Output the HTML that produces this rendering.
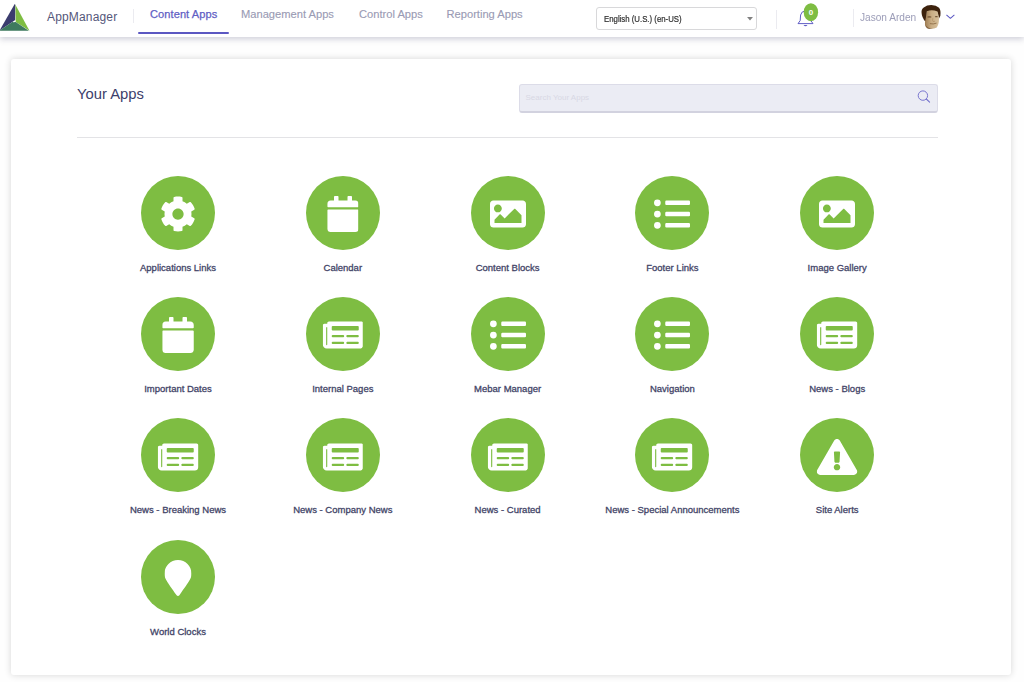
<!DOCTYPE html>
<html lang="en">
<head>
<meta charset="utf-8">
<title>AppManager</title>
<style>
*{box-sizing:border-box;margin:0;padding:0}
html,body{width:1024px;height:682px;overflow:hidden;background:#fefefe;font-family:"Liberation Sans",sans-serif}
.abs{position:absolute}
#hdr{position:absolute;left:0;top:0;width:1024px;height:37px;background:#fff;box-shadow:0 2px 6px rgba(60,60,100,.25);z-index:5}
.t{position:absolute;white-space:nowrap;line-height:1}
.nav{font-size:11.15px;color:#9a9bb4;top:9.300px;-webkit-text-stroke:.12px #9a9bb4}
.nav.on{color:#615ec4;-webkit-text-stroke:.25px #615ec4;letter-spacing:.08px;font-size:11.05px}
.vd{position:absolute;width:1px;background:#ebebf0}
#card{position:absolute;left:11px;top:59px;width:999.500px;height:616px;background:#fff;border-radius:3px;box-shadow:0 0 7px rgba(0,0,0,.16)}
.app{position:absolute;width:74px;height:74px;border-radius:50%;background:#7ebd42}
.app svg{position:absolute;left:50%;top:calc(50% + 1.3px);transform:translate(-50%,-50%);fill:#fff}
.lbl{position:absolute;white-space:nowrap;line-height:1;font-size:9.5px;font-weight:400;color:#434568;-webkit-text-stroke:.3px #434568;transform:translateX(-50%)}
#search{position:absolute;left:519px;top:84px;width:419px;height:28.5px;background:#ebecf4;border:1px solid #dcdce8;border-bottom:2px solid #d2d2df;border-radius:3px}
</style>
</head>
<body>
<div id="hdr">
  <svg class="abs" id="logo" style="left:0;top:0" width="32" height="32" viewBox="0 0 32 32">
    <polygon points="14.7,4 -0.3,30.4 12.700,21.700 15.200,20 15.300,4.800" fill="#3b3c6e"/>
    <polygon points="15.400,4.800 29.500,30.700 15.700,22.100" fill="#7ebd42"/>
    <polygon points="-0.3,30.400 12.700,21.700 13.200,22.200 15.700,22.100 28.800,30.700 -0.3,30.700" fill="#3e7a5e"/>
  </svg>
  <div class="t" id="brand" style="left:47px;top:11.150px;font-size:12px;letter-spacing:.16px;color:#55577a">AppManager</div>
  <div class="vd" style="left:133px;top:9px;height:14px"></div>
  <div class="t nav on" id="n1" style="left:150px">Content Apps</div>
  <div class="abs" style="left:138px;top:31.5px;width:91px;height:2px;background:#5b57c2;border-radius:1px"></div>
  <div class="t nav" id="n2" style="left:241px">Management Apps</div>
  <div class="t nav" id="n3" style="left:359px">Control Apps</div>
  <div class="t nav" id="n4" style="left:446.5px">Reporting Apps</div>
  <div class="abs" style="left:596px;top:6.500px;width:161px;height:23px;border:1px solid #d8d8da;border-radius:3px;background:#fff"></div>
  <div class="t" id="sel" style="left:604px;top:14.700px;font-size:8.8px;color:#2e2e2e;-webkit-text-stroke:.2px #2e2e2e;transform:scaleX(.887);transform-origin:0 0">English (U.S.) (en-US)</div>
  <svg class="abs" style="left:747.400px;top:17.400px" width="6" height="3.400" viewBox="0 0 7 4"><polygon points="0,0 7,0 3.500,4" fill="#808080"/></svg>
  <div class="vd" style="left:776px;top:10px;height:18.500px"></div>
  <svg class="abs" id="bell" style="left:796px;top:2px" width="24" height="26" viewBox="0 0 24 26">
    <path d="M2 21.6 L4.2 18.6 L4.6 13 Q5.4 9.2 9.4 8.8 Q13.4 9.2 14.4 13 L14.8 18.6 L17 21.6 Z" fill="none" stroke="#625fc6" stroke-width="1" stroke-linejoin="round"/>
    <path d="M7.500 22.900 Q9.500 25.400 11.500 22.900 Z" fill="#625fc6"/>
    <ellipse cx="14.9" cy="10.2" rx="7.2" ry="9" fill="#7ebd42"/>
    <text x="14.9" y="12.9" font-size="8" font-weight="700" fill="#fff" text-anchor="middle" font-family="Liberation Sans, sans-serif">0</text>
  </svg>
  <div class="vd" style="left:853px;top:9px;height:18px"></div>
  <div class="t" id="user" style="left:860px;top:11.600px;font-size:10.6px;color:#9c9db8;transform:scaleX(.955);transform-origin:0 0">Jason Arden</div>
  <svg class="abs" id="face" style="left:900px;top:0" width="64" height="40" viewBox="0 0 1024 640">
    <defs>
      <linearGradient id="sk" x1="0" y1="0" x2="1" y2="0"><stop offset="0" stop-color="#9c7a50"/><stop offset=".45" stop-color="#c9ad84"/><stop offset="1" stop-color="#d6c09c"/></linearGradient>
      <filter id="bl" x="-10%" y="-10%" width="120%" height="120%"><feGaussianBlur stdDeviation="5"/></filter>
    </defs>
    <g filter="url(#bl)">
    <path d="M345 205 Q338 150 380 118 Q430 80 500 80 Q580 82 625 125 Q657 170 646 250 L622 300 L600 200 L430 180 L425 340 L405 345 Q350 285 345 205 Z" fill="#3d2410"/>
    <path d="M432 178 Q510 150 600 182 Q620 240 624 300 Q622 395 588 438 Q530 472 450 456 Q402 440 400 400 Q394 350 406 318 Q422 250 432 178 Z" fill="url(#sk)"/>
    <ellipse cx="470" cy="270" rx="34" ry="11" fill="#5b3b1e" opacity=".85"/>
    <ellipse cx="582" cy="266" rx="24" ry="10" fill="#5b3b1e" opacity=".8"/>
    <path d="M525 290 Q515 330 530 345 L560 340" stroke="#a07c50" stroke-width="10" fill="none" opacity=".7"/>
    <path d="M478 378 Q530 392 585 370" stroke="#7d5a36" stroke-width="11" fill="none"/>
    <path d="M405 400 Q450 455 530 462 Q480 470 430 450 Z" fill="#6e4d2a" opacity=".7"/>
    </g>
  </svg>
  <svg class="abs" style="left:945px;top:14px" width="11" height="6" viewBox="0 0 11 6"><path d="M1.700 1.200 L5.400 4.300 L9.100 1.200" fill="none" stroke="#5b57c2" stroke-width="1.050" stroke-linecap="round" stroke-linejoin="round"/></svg>
</div>
<div id="card"></div>
<div class="t" id="ya" style="left:77px;top:86.800px;font-size:14.8px;color:#3c3e6b">Your Apps</div>
<div id="search"></div>
<div class="t" id="ph" style="left:525.500px;top:93.600px;font-size:8px;color:#d8d8e4">Search Your Apps</div>
<svg class="abs" style="left:916px;top:89px" width="16" height="16" viewBox="0 0 16 16"><circle cx="6.900" cy="6.600" r="4.700" fill="none" stroke="#7370cc" stroke-width=".95"/><path d="M10.300 10 L13.600 13.200" stroke="#7370cc" stroke-width="1.050" stroke-linecap="round"/></svg>
<div class="abs" style="left:77px;top:137px;width:861px;height:1px;background:#e3e3e6"></div>
<div class="app" style="left:141.0px;top:175.6px"><svg width="36.00" height="36" viewBox="0 0 512 512"><path d="M487.4 315.7l-42.6-24.6c4.3-23.2 4.3-47 0-70.2l42.6-24.6c4.9-2.8 7.1-8.600 5.5-14-11.1-35.6-30-67.8-54.7-94.6-3.8-4.100-10-5.100-14.8-2.300L380.800 110c-17.900-15.400-38.500-27.300-60.800-35.100V25.800c0-5.600-3.900-10.500-9.400-11.700-36.700-8.200-74.300-7.800-109.200 0-5.500 1.200-9.400 6.100-9.400 11.700V75c-22.200 7.900-42.800 19.800-60.800 35.100L88.700 85.500c-4.900-2.800-11-1.900-14.800 2.300-24.700 26.700-43.600 58.900-54.700 94.600-1.700 5.400.6 11.200 5.500 14L67.300 221c-4.300 23.200-4.300 47 0 70.200l-42.600 24.600c-4.900 2.800-7.100 8.600-5.500 14 11.100 35.600 30 67.800 54.700 94.600 3.800 4.100 10 5.100 14.800 2.300l42.600-24.600c17.900 15.400 38.500 27.300 60.800 35.100v49.200c0 5.600 3.900 10.500 9.400 11.700 36.700 8.200 74.300 7.800 109.200 0 5.500-1.200 9.400-6.100 9.400-11.700v-49.200c22.200-7.900 42.800-19.800 60.800-35.100l42.600 24.600c4.900 2.800 11 1.900 14.800-2.300 24.700-26.700 43.600-58.900 54.700-94.600 1.500-5.500-.7-11.300-5.600-14.100zM256 336c-44.100 0-80-35.900-80-80s35.900-80 80-80 80 35.900 80 80-35.900 80-80 80z"/></svg></div>
<div class="lbl" style="left:178.0px;top:262.60px">Applications Links</div>
<div class="app" style="left:305.8px;top:175.6px"><svg width="31.50" height="36" viewBox="0 0 448 512"><path d="M12 192h424c6.600 0 12 5.400 12 12v260c0 26.500-21.500 48-48 48H48c-26.500 0-48-21.500-48-48V204c0-6.600 5.400-12 12-12zm436-44v-36c0-26.500-21.500-48-48-48h-48V12c0-6.600-5.400-12-12-12h-40c-6.600 0-12 5.400-12 12v52H160V12c0-6.600-5.400-12-12-12h-40c-6.600 0-12 5.400-12 12v52H48C21.500 64 0 85.500 0 112v36c0 6.600 5.400 12 12 12h424c6.600 0 12-5.400 12-12z"/></svg></div>
<div class="lbl" style="left:342.8px;top:262.60px">Calendar</div>
<div class="app" style="left:470.6px;top:175.6px"><svg width="36.00" height="36" viewBox="0 0 512 512"><path d="M464 448H48c-26.510 0-48-21.490-48-48V112c0-26.510 21.490-48 48-48h416c26.510 0 48 21.490 48 48v288c0 26.510-21.490 48-48 48zM112 120c-30.928 0-56 25.072-56 56s25.072 56 56 56 56-25.072 56-56-25.072-56-56-56zM64 384h384V272l-87.515-87.515c-4.686-4.686-12.284-4.686-16.971 0L208 320l-55.515-55.515c-4.686-4.686-12.284-4.686-16.971 0L64 336v48z"/></svg></div>
<div class="lbl" style="left:507.6px;top:262.60px">Content Blocks</div>
<div class="app" style="left:635.4px;top:175.6px"><svg width="36.00" height="36" viewBox="0 0 512 512"><path d="M48 48a48 48 0 1 0 48 48 48 48 0 0 0-48-48zm0 160a48 48 0 1 0 48 48 48 48 0 0 0-48-48zm0 160a48 48 0 1 0 48 48 48 48 0 0 0-48-48zm448 16H176a16 16 0 0 0-16 16v32a16 16 0 0 0 16 16h320a16 16 0 0 0 16-16v-32a16 16 0 0 0-16-16zm0-320H176a16 16 0 0 0-16 16v32a16 16 0 0 0 16 16h320a16 16 0 0 0 16-16V80a16 16 0 0 0-16-16zm0 160H176a16 16 0 0 0-16 16v32a16 16 0 0 0 16 16h320a16 16 0 0 0 16-16v-32a16 16 0 0 0-16-16z"/></svg></div>
<div class="lbl" style="left:672.4px;top:262.60px">Footer Links</div>
<div class="app" style="left:800.2px;top:175.6px"><svg width="36.00" height="36" viewBox="0 0 512 512"><path d="M464 448H48c-26.510 0-48-21.490-48-48V112c0-26.510 21.490-48 48-48h416c26.510 0 48 21.490 48 48v288c0 26.510-21.490 48-48 48zM112 120c-30.928 0-56 25.072-56 56s25.072 56 56 56 56-25.072 56-56-25.072-56-56-56zM64 384h384V272l-87.515-87.515c-4.686-4.686-12.284-4.686-16.971 0L208 320l-55.515-55.515c-4.686-4.686-12.284-4.686-16.971 0L64 336v48z"/></svg></div>
<div class="lbl" style="left:837.2px;top:262.60px">Image Gallery</div>
<div class="app" style="left:141.0px;top:297.0px"><svg width="31.50" height="36" viewBox="0 0 448 512"><path d="M12 192h424c6.600 0 12 5.400 12 12v260c0 26.500-21.500 48-48 48H48c-26.500 0-48-21.500-48-48V204c0-6.600 5.400-12 12-12zm436-44v-36c0-26.500-21.500-48-48-48h-48V12c0-6.600-5.400-12-12-12h-40c-6.600 0-12 5.400-12 12v52H160V12c0-6.600-5.400-12-12-12h-40c-6.600 0-12 5.400-12 12v52H48C21.500 64 0 85.500 0 112v36c0 6.600 5.400 12 12 12h424c6.600 0 12-5.400 12-12z"/></svg></div>
<div class="lbl" style="left:178.0px;top:384.00px">Important Dates</div>
<div class="app" style="left:305.8px;top:297.0px"><svg width="40.50" height="36" viewBox="0 0 576 512"><path d="M552 64H88c-13.255 0-24 10.745-24 24v8H24c-13.255 0-24 10.745-24 24v272c0 30.928 25.072 56 56 56h472c26.510 0 48-21.490 48-48V88c0-13.255-10.745-24-24-24zM56 400a8 8 0 0 1-8-8V144h16v248a8 8 0 0 1-8 8zm236-16H140c-6.627 0-12-5.373-12-12v-8c0-6.627 5.373-12 12-12h152c6.627 0 12 5.373 12 12v8c0 6.627-5.373 12-12 12zm208 0H348c-6.627 0-12-5.373-12-12v-8c0-6.627 5.373-12 12-12h152c6.627 0 12 5.373 12 12v8c0 6.627-5.373 12-12 12zm-208-96H140c-6.627 0-12-5.373-12-12v-8c0-6.627 5.373-12 12-12h152c6.627 0 12 5.373 12 12v8c0 6.627-5.373 12-12 12zm208 0H348c-6.627 0-12-5.373-12-12v-8c0-6.627 5.373-12 12-12h152c6.627 0 12 5.373 12 12v8c0 6.627-5.373 12-12 12zm0-96H140c-6.627 0-12-5.373-12-12v-40c0-6.627 5.373-12 12-12h360c6.627 0 12 5.373 12 12v40c0 6.627-5.373 12-12 12z"/></svg></div>
<div class="lbl" style="left:342.8px;top:384.00px">Internal Pages</div>
<div class="app" style="left:470.6px;top:297.0px"><svg width="36.00" height="36" viewBox="0 0 512 512"><path d="M48 48a48 48 0 1 0 48 48 48 48 0 0 0-48-48zm0 160a48 48 0 1 0 48 48 48 48 0 0 0-48-48zm0 160a48 48 0 1 0 48 48 48 48 0 0 0-48-48zm448 16H176a16 16 0 0 0-16 16v32a16 16 0 0 0 16 16h320a16 16 0 0 0 16-16v-32a16 16 0 0 0-16-16zm0-320H176a16 16 0 0 0-16 16v32a16 16 0 0 0 16 16h320a16 16 0 0 0 16-16V80a16 16 0 0 0-16-16zm0 160H176a16 16 0 0 0-16 16v32a16 16 0 0 0 16 16h320a16 16 0 0 0 16-16v-32a16 16 0 0 0-16-16z"/></svg></div>
<div class="lbl" style="left:507.6px;top:384.00px">Mebar Manager</div>
<div class="app" style="left:635.4px;top:297.0px"><svg width="36.00" height="36" viewBox="0 0 512 512"><path d="M48 48a48 48 0 1 0 48 48 48 48 0 0 0-48-48zm0 160a48 48 0 1 0 48 48 48 48 0 0 0-48-48zm0 160a48 48 0 1 0 48 48 48 48 0 0 0-48-48zm448 16H176a16 16 0 0 0-16 16v32a16 16 0 0 0 16 16h320a16 16 0 0 0 16-16v-32a16 16 0 0 0-16-16zm0-320H176a16 16 0 0 0-16 16v32a16 16 0 0 0 16 16h320a16 16 0 0 0 16-16V80a16 16 0 0 0-16-16zm0 160H176a16 16 0 0 0-16 16v32a16 16 0 0 0 16 16h320a16 16 0 0 0 16-16v-32a16 16 0 0 0-16-16z"/></svg></div>
<div class="lbl" style="left:672.4px;top:384.00px">Navigation</div>
<div class="app" style="left:800.2px;top:297.0px"><svg width="40.50" height="36" viewBox="0 0 576 512"><path d="M552 64H88c-13.255 0-24 10.745-24 24v8H24c-13.255 0-24 10.745-24 24v272c0 30.928 25.072 56 56 56h472c26.510 0 48-21.490 48-48V88c0-13.255-10.745-24-24-24zM56 400a8 8 0 0 1-8-8V144h16v248a8 8 0 0 1-8 8zm236-16H140c-6.627 0-12-5.373-12-12v-8c0-6.627 5.373-12 12-12h152c6.627 0 12 5.373 12 12v8c0 6.627-5.373 12-12 12zm208 0H348c-6.627 0-12-5.373-12-12v-8c0-6.627 5.373-12 12-12h152c6.627 0 12 5.373 12 12v8c0 6.627-5.373 12-12 12zm-208-96H140c-6.627 0-12-5.373-12-12v-8c0-6.627 5.373-12 12-12h152c6.627 0 12 5.373 12 12v8c0 6.627-5.373 12-12 12zm208 0H348c-6.627 0-12-5.373-12-12v-8c0-6.627 5.373-12 12-12h152c6.627 0 12 5.373 12 12v8c0 6.627-5.373 12-12 12zm0-96H140c-6.627 0-12-5.373-12-12v-40c0-6.627 5.373-12 12-12h360c6.627 0 12 5.373 12 12v40c0 6.627-5.373 12-12 12z"/></svg></div>
<div class="lbl" style="left:837.2px;top:384.00px">News - Blogs</div>
<div class="app" style="left:141.0px;top:418.4px"><svg width="40.50" height="36" viewBox="0 0 576 512"><path d="M552 64H88c-13.255 0-24 10.745-24 24v8H24c-13.255 0-24 10.745-24 24v272c0 30.928 25.072 56 56 56h472c26.510 0 48-21.490 48-48V88c0-13.255-10.745-24-24-24zM56 400a8 8 0 0 1-8-8V144h16v248a8 8 0 0 1-8 8zm236-16H140c-6.627 0-12-5.373-12-12v-8c0-6.627 5.373-12 12-12h152c6.627 0 12 5.373 12 12v8c0 6.627-5.373 12-12 12zm208 0H348c-6.627 0-12-5.373-12-12v-8c0-6.627 5.373-12 12-12h152c6.627 0 12 5.373 12 12v8c0 6.627-5.373 12-12 12zm-208-96H140c-6.627 0-12-5.373-12-12v-8c0-6.627 5.373-12 12-12h152c6.627 0 12 5.373 12 12v8c0 6.627-5.373 12-12 12zm208 0H348c-6.627 0-12-5.373-12-12v-8c0-6.627 5.373-12 12-12h152c6.627 0 12 5.373 12 12v8c0 6.627-5.373 12-12 12zm0-96H140c-6.627 0-12-5.373-12-12v-40c0-6.627 5.373-12 12-12h360c6.627 0 12 5.373 12 12v40c0 6.627-5.373 12-12 12z"/></svg></div>
<div class="lbl" style="left:178.0px;top:505.40px">News - Breaking News</div>
<div class="app" style="left:305.8px;top:418.4px"><svg width="40.50" height="36" viewBox="0 0 576 512"><path d="M552 64H88c-13.255 0-24 10.745-24 24v8H24c-13.255 0-24 10.745-24 24v272c0 30.928 25.072 56 56 56h472c26.510 0 48-21.490 48-48V88c0-13.255-10.745-24-24-24zM56 400a8 8 0 0 1-8-8V144h16v248a8 8 0 0 1-8 8zm236-16H140c-6.627 0-12-5.373-12-12v-8c0-6.627 5.373-12 12-12h152c6.627 0 12 5.373 12 12v8c0 6.627-5.373 12-12 12zm208 0H348c-6.627 0-12-5.373-12-12v-8c0-6.627 5.373-12 12-12h152c6.627 0 12 5.373 12 12v8c0 6.627-5.373 12-12 12zm-208-96H140c-6.627 0-12-5.373-12-12v-8c0-6.627 5.373-12 12-12h152c6.627 0 12 5.373 12 12v8c0 6.627-5.373 12-12 12zm208 0H348c-6.627 0-12-5.373-12-12v-8c0-6.627 5.373-12 12-12h152c6.627 0 12 5.373 12 12v8c0 6.627-5.373 12-12 12zm0-96H140c-6.627 0-12-5.373-12-12v-40c0-6.627 5.373-12 12-12h360c6.627 0 12 5.373 12 12v40c0 6.627-5.373 12-12 12z"/></svg></div>
<div class="lbl" style="left:342.8px;top:505.40px">News - Company News</div>
<div class="app" style="left:470.6px;top:418.4px"><svg width="40.50" height="36" viewBox="0 0 576 512"><path d="M552 64H88c-13.255 0-24 10.745-24 24v8H24c-13.255 0-24 10.745-24 24v272c0 30.928 25.072 56 56 56h472c26.510 0 48-21.490 48-48V88c0-13.255-10.745-24-24-24zM56 400a8 8 0 0 1-8-8V144h16v248a8 8 0 0 1-8 8zm236-16H140c-6.627 0-12-5.373-12-12v-8c0-6.627 5.373-12 12-12h152c6.627 0 12 5.373 12 12v8c0 6.627-5.373 12-12 12zm208 0H348c-6.627 0-12-5.373-12-12v-8c0-6.627 5.373-12 12-12h152c6.627 0 12 5.373 12 12v8c0 6.627-5.373 12-12 12zm-208-96H140c-6.627 0-12-5.373-12-12v-8c0-6.627 5.373-12 12-12h152c6.627 0 12 5.373 12 12v8c0 6.627-5.373 12-12 12zm208 0H348c-6.627 0-12-5.373-12-12v-8c0-6.627 5.373-12 12-12h152c6.627 0 12 5.373 12 12v8c0 6.627-5.373 12-12 12zm0-96H140c-6.627 0-12-5.373-12-12v-40c0-6.627 5.373-12 12-12h360c6.627 0 12 5.373 12 12v40c0 6.627-5.373 12-12 12z"/></svg></div>
<div class="lbl" style="left:507.6px;top:505.40px">News - Curated</div>
<div class="app" style="left:635.4px;top:418.4px"><svg width="40.50" height="36" viewBox="0 0 576 512"><path d="M552 64H88c-13.255 0-24 10.745-24 24v8H24c-13.255 0-24 10.745-24 24v272c0 30.928 25.072 56 56 56h472c26.510 0 48-21.490 48-48V88c0-13.255-10.745-24-24-24zM56 400a8 8 0 0 1-8-8V144h16v248a8 8 0 0 1-8 8zm236-16H140c-6.627 0-12-5.373-12-12v-8c0-6.627 5.373-12 12-12h152c6.627 0 12 5.373 12 12v8c0 6.627-5.373 12-12 12zm208 0H348c-6.627 0-12-5.373-12-12v-8c0-6.627 5.373-12 12-12h152c6.627 0 12 5.373 12 12v8c0 6.627-5.373 12-12 12zm-208-96H140c-6.627 0-12-5.373-12-12v-8c0-6.627 5.373-12 12-12h152c6.627 0 12 5.373 12 12v8c0 6.627-5.373 12-12 12zm208 0H348c-6.627 0-12-5.373-12-12v-8c0-6.627 5.373-12 12-12h152c6.627 0 12 5.373 12 12v8c0 6.627-5.373 12-12 12zm0-96H140c-6.627 0-12-5.373-12-12v-40c0-6.627 5.373-12 12-12h360c6.627 0 12 5.373 12 12v40c0 6.627-5.373 12-12 12z"/></svg></div>
<div class="lbl" style="left:672.4px;top:505.40px">News - Special Announcements</div>
<div class="app" style="left:800.2px;top:418.4px"><svg width="40.50" height="36" viewBox="0 0 576 512"><path d="M569.517 440.013C587.975 472.007 564.806 512 527.940 512H48.054c-36.937 0-59.999-40.055-41.577-71.987L246.423 23.985c18.467-32.009 64.720-31.951 83.154 0l239.940 416.028zM288 354c-25.405 0-46 20.595-46 46s20.595 46 46 46 46-20.595 46-46-20.595-46-46-46zm-43.673-165.346l7.418 136c.347 6.364 5.609 11.346 11.982 11.346h48.546c6.373 0 11.635-4.982 11.982-11.346l7.418-136c.375-6.874-5.098-12.654-11.982-12.654h-63.383c-6.884 0-12.356 5.780-11.981 12.654z"/></svg></div>
<div class="lbl" style="left:837.2px;top:505.40px">Site Alerts</div>
<div class="app" style="left:141.0px;top:539.8px"><svg width="27.00" height="36" viewBox="0 0 384 512"><path d="M172.268 501.670C26.970 291.031 0 269.413 0 192 0 85.961 85.961 0 192 0s192 85.961 192 192c0 77.413-26.970 99.031-172.268 309.670-9.535 13.774-29.930 13.773-39.464 0z"/></svg></div>
<div class="lbl" style="left:178.0px;top:626.80px">World Clocks</div>
</body>
</html>
